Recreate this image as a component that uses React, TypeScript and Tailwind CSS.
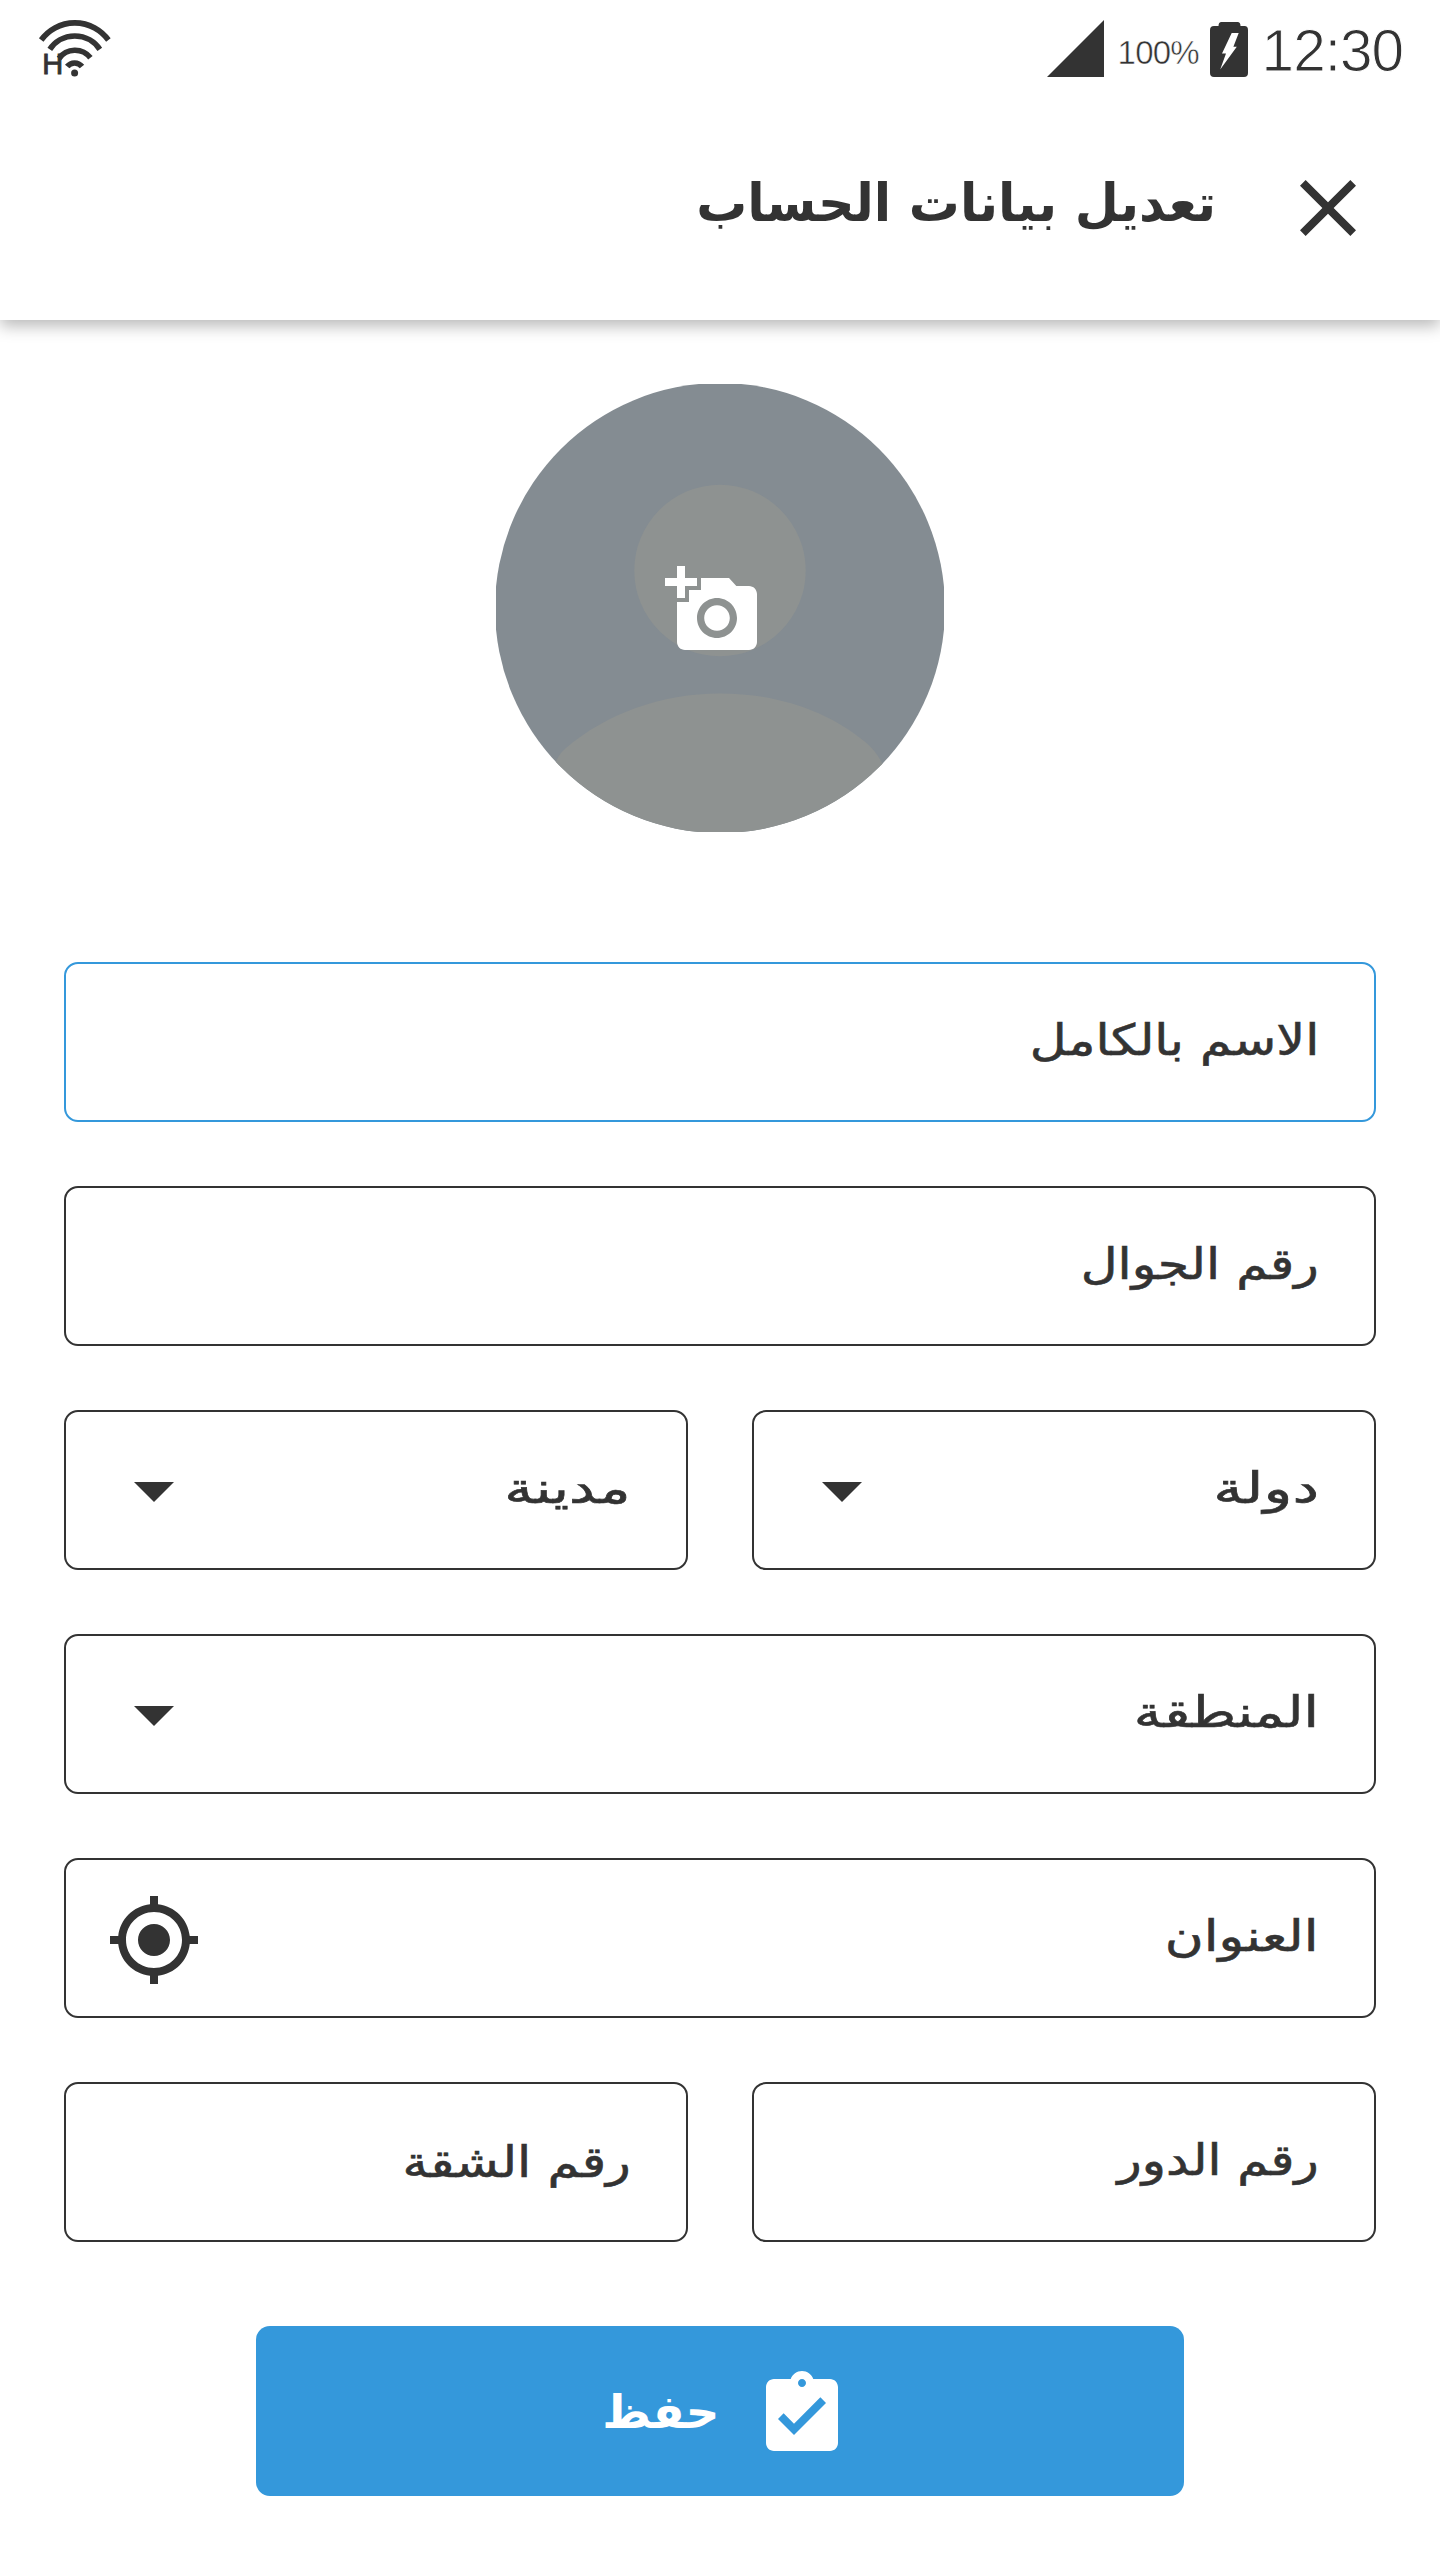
import React from "react";

const INK = "text-[#333333]";

function WifiIcon() {
  return (
    <svg className="h-[64px] w-[76px]" viewBox="36 16 76 64" fill="none" stroke="#333333" strokeWidth="5.6">
      <path d="M41.2 40A41.5 41.5 0 0 1 108.4 40" />
      <path d="M49.8 49.4A30 30 0 0 1 99.8 49.4" />
      <path d="M59 58.5A19.6 19.6 0 0 1 90.4 57.8" />
      <path d="M67.2 66.6A9.4 9.4 0 0 1 82 66.6" />
      <circle cx="74.6" cy="73" r="3.5" fill="#333333" stroke="none" />
      <text x="42.2" y="74.300" fontFamily="Liberation Sans" fontSize="29" fill="#333333" stroke="#333333" strokeWidth="0.9">
        H
      </text>
    </svg>
  );
}

function SignalIcon() {
  return (
    <svg className="h-[57px] w-[57px]" viewBox="0 0 57 57" fill="#333333">
      <path d="M57 0V57H0z" />
    </svg>
  );
}

function BatteryIcon() {
  return (
    <svg className="h-[55px] w-[38px]" viewBox="0 0 38 55">
      <path
        fill="#333333"
        d="M11.5 0H27.500Q30.500 0 30.500 4H34.500Q38 4 38 8V51Q38 55 34 55H4Q0 55 0 51V8Q0 4 4 4H8.500Q8.500 0 11.500 0z"
      />
      <path fill="#fff" d="M21.700 11H28.700L23.400 24.700H26.800L10.200 47.500L16 31.500H12z" />
    </svg>
  );
}

function Icon({ d, className }: { d: string; className: string }) {
  return (
    <svg className={"h-24 w-24 shrink-0 " + className} viewBox="0 0 24 24" fill="currentColor">
      <path d={d} />
    </svg>
  );
}

const CLOSE = "M19 6.41L17.59 5 12 10.59 6.41 5 5 6.41 10.59 12 5 17.59 6.41 19 12 13.41 17.59 19 19 17.59 13.41 12z";
const ADD_PHOTO =
  "M3 4V1h2v3h3v2H5v3H3V6H0V4h3zm3 6V7h3V4h7l1.830 2H21c1.100 0 2 .9 2 2v12c0 1.100-.9 2-2 2H5c-1.100 0-2-.9-2-2V10h3zm7 9c2.760 0 5-2.240 5-5s-2.240-5-5-5-5 2.240-5 5 2.240 5 5 5zm-3.200-5c0 1.770 1.430 3.200 3.200 3.200s3.200-1.430 3.200-3.200-1.430-3.200-3.200-3.200-3.200 1.430-3.200 3.200z";
const ARROW = "M7 10l5 5 5-5z";
const GPS =
  "M12 8c-2.210 0-4 1.790-4 4s1.790 4 4 4 4-1.790 4-4-1.790-4-4-4zm8.940 3c-.46-4.170-3.770-7.480-7.940-7.940V1h-2v2.060C6.830 3.520 3.520 6.830 3.060 11H1v2h2.060c.46 4.170 3.770 7.480 7.940 7.940V23h2v-2.060c4.170-.46 7.480-3.770 7.940-7.940H23v-2h-2.060zM12 19c-3.870 0-7-3.130-7-7s3.130-7 7-7 7 3.130 7 7-3.130 7-7 7z";
const TASK_DONE =
  "M19 3h-4.180C14.400 1.840 13.300 1 12 1c-1.300 0-2.400.84-2.820 2H5c-1.100 0-2 .9-2 2v14c0 1.100.9 2 2 2h14c1.100 0 2-.9 2-2V5c0-1.100-.9-2-2-2zm-7 0c.55 0 1 .45 1 1s-.45 1-1 1-1-.45-1-1 .45-1 1-1zm-2 14l-4-4 1.410-1.410L10 14.170l6.590-6.590L18 9l-8 8z";

function Avatar() {
  return (
    <svg className="h-[448px] w-[448px]" viewBox="0 0 448 448">
      <defs>
        <clipPath id="face">
          <circle cx="224" cy="224" r="225" />
        </clipPath>
      </defs>
      <g clipPath="url(#face)">
        <rect width="448" height="448" fill="#848c92" />
        <circle cx="224" cy="186.500" r="85.700" fill="#8e9291" />
        <path
          fill="#8e9291"
          d="M52 396C60 377 62 371 70 364C110 330 165 309.500 224 309.500C283 309.500 332 328 368 357C378 365 384 374 390 386V448H52z"
        />
      </g>
    </svg>
  );
}

function Field({ label, icon, focused, fit }: { label: string; icon?: string; focused?: boolean; fit: string }) {
  return (
    <div
      className={
        "flex h-40 flex-1 items-center justify-between rounded-[14px] border-2 pr-[55px] pl-[40px] " +
        (focused ? "border-[#3498db]" : "border-[#333333]")
      }
    >
      <span className={"origin-right text-[43px] leading-none whitespace-nowrap [-webkit-text-stroke:0.6px_#333333] " + fit}>
        {label}
      </span>
      {icon && <Icon d={icon} className={icon === GPS ? "mt-1" : ""} />}
    </div>
  );
}

export default function App() {
  return (
    <div dir="rtl" className={"flex h-[2560px] w-[1440px] flex-col overflow-hidden bg-white font-['DejaVu_Sans',sans-serif] " + INK}>
      <header className="h-80 shrink-0 bg-white shadow-[0_6px_15px_rgba(0,0,0,0.28)]">
        <div dir="ltr" className="flex h-[100px] items-start pt-4 pr-[37px] pl-9 font-['Liberation_Sans',sans-serif]">
          <WifiIcon />
          <div className="ml-auto flex items-start">
            <div className="mt-1 mr-[14px]"><SignalIcon /></div>
            <span className="mt-[19px] mr-[13px] w-[79px] text-[33px] leading-[36px] tracking-[-0.8px] whitespace-nowrap [-webkit-text-stroke:0.5px_#fff]">100%</span>
            <div className="mt-[6px] mr-[14px]"><BatteryIcon /></div>
            <span className="mt-[2px] text-[58.500px] leading-[66px] tracking-[-1px] whitespace-nowrap [-webkit-text-stroke:1px_#fff]">12:30</span>
          </div>
        </div>
        <div className="flex items-center pt-[60px] pr-16">
          <Icon d={CLOSE} className="" />
          <h1 className="mr-16 mb-2.5 origin-right scale-x-[0.977] text-[52px] leading-none font-bold whitespace-nowrap">تعديل بيانات الحساب</h1>
        </div>
      </header>

      <main className="flex flex-1 flex-col items-center pt-16">
        <div className="relative h-[448px] w-[448px]">
          <Avatar />
          <Icon d={ADD_PHOTO} className="absolute top-[178px] left-[169px] text-white" />
        </div>

        <form className="mt-[130px] flex w-[1312px] flex-col gap-16">
          <div className="flex"><Field label="الاسم بالكامل" focused fit="mb-1 scale-x-[1.18]" /></div>
          <div className="flex"><Field label="رقم الجوال" fit="mb-1 scale-x-[1.18]" /></div>
          <div className="flex gap-16">
            <Field label="دولة" icon={ARROW} fit="mb-1 scale-x-[1.39]" />
            <Field label="مدينة" icon={ARROW} fit="mb-1 scale-x-[1.35]" />
          </div>
          <div className="flex"><Field label="المنطقة" icon={ARROW} fit="mb-1 scale-x-[1.295]" /></div>
          <div className="flex"><Field label="العنوان" icon={GPS} fit="mb-1 scale-x-[1.235]" /></div>
          <div className="flex gap-16">
            <Field label="رقم الدور" fit="mb-1 scale-x-[1.165]" />
            <Field label="رقم الشقة" fit="scale-x-[1.19]" />
          </div>
        </form>

        <button type="button" className="mt-[84px] flex h-[170px] w-[928px] items-center rounded-[14px] bg-[#3498db] pr-[334px] text-white">
          <Icon d={TASK_DONE} className="mt-2" />
          <span className="mt-0.5 mr-[34px] origin-right scale-x-[1.015] text-[46px] leading-none font-bold">حفظ</span>
        </button>
      </main>
    </div>
  );
}
